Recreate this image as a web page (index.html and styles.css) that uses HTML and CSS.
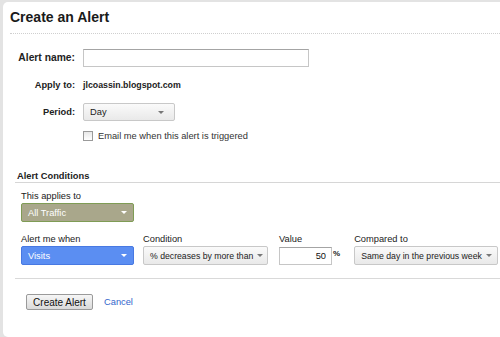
FILE: index.html
```html
<!DOCTYPE html>
<html lang="en">
<head>
	<meta charset="UTF-8">
	<title>Create an Alert</title>
	<link rel="stylesheet" href="styles.css">
</head>
<body>
	<div class="panel">
		<h1 class="title">Create an Alert</h1>

		<div class="form">
			<div class="row">
				<label class="lbl big">Alert name:</label>
				<input type="text" class="text-input name-input">
			</div>
			<div class="row">
				<span class="lbl">Apply to:</span>
				<span class="site">jlcoassin.blogspot.com</span>
			</div>
			<div class="row">
				<span class="lbl">Period:</span>
				<div class="select grey period"><span>Day</span><i class="caret"></i></div>
			</div>
			<div class="row check-row">
				<span class="lbl"></span>
				<label class="check"><span class="box"></span>Email me when this alert is triggered</label>
			</div>
		</div>

		<div class="conditions">
			<h2 class="sub">Alert Conditions</h2>
			<div class="cond-body">
				<div class="field">
					<div class="field-label">This applies to</div>
					<div class="select green w-first"><span>All Traffic</span><i class="caret"></i></div>
				</div>
				<div class="cond-row">
					<div class="field gap9">
						<div class="field-label">Alert me when</div>
						<div class="select blue w-first"><span>Visits</span><i class="caret"></i></div>
					</div>
					<div class="field gap11">
						<div class="field-label">Condition</div>
						<div class="select grey small w-cond"><span>% decreases by more than</span><i class="caret"></i></div>
					</div>
					<div class="field gap14">
						<div class="field-label">Value</div>
						<div class="value-wrap">
							<input type="text" class="text-input value-input" value="50">
							<span class="pct">%</span>
						</div>
					</div>
					<div class="field">
						<div class="field-label">Compared to</div>
						<div class="select grey small w-comp"><span>Same day in the previous week</span><i class="caret"></i></div>
					</div>
				</div>
			</div>
		</div>

		<div class="actions">
			<button class="btn">Create Alert</button>
			<a href="javascript:;" class="cancel">Cancel</a>
		</div>
	</div>
</body>
</html>
```

FILE: styles.css
```css
* {
	margin: 0;
	padding: 0;
	box-sizing: border-box;
}
html, body {
	height: 100%;
}
body {
	background: #e3e3e3;
	font-family: "Liberation Sans", Arial, sans-serif;
	font-size: 9.3px;
	color: #222;
	overflow: hidden;
}
.panel {
	margin: 2px 0 0 3px;
	height: calc(100% - 2px);
	padding-top: 7px;
	background: #fff;
	border-radius: 5px 0 0 5px;
}
.title {
	margin-left: 7px;
	padding-bottom: 8px;
	font-size: 14px;
	line-height: 16px;
	font-weight: bold;
	color: #1a1a1a;
	border-bottom: 1px dotted #cfcfcf;
}

/* top form */
.form {
	padding-top: 15px;
}
.row {
	display: flex;
	align-items: center;
	height: 18px;
	margin-bottom: 9px;
}
.row:nth-child(3) {
	margin-bottom: 6px;
}
.lbl {
	width: 72px;
	margin-right: 8px;
	text-align: right;
	font-weight: bold;
	line-height: 12px;
}
.lbl.big {
	font-size: 10.3px;
}
.site {
	font-weight: bold;
	font-size: 8.8px;
}
.text-input {
	font-family: inherit;
	font-size: 9.3px;
	border: 1px solid #c6c6c6;
	border-top-color: #a4a4a4;
	outline: none;
	background: #fff;
}
.name-input {
	width: 226px;
	height: 18px;
}
.check {
	display: flex;
	align-items: center;
	color: #333;
}
.box {
	width: 10px;
	height: 10px;
	margin-right: 5px;
	border: 1px solid #9a9a9a;
	background: linear-gradient(#e8e8e8, #fff);
}

/* selects */
.select {
	display: flex;
	align-items: center;
	justify-content: space-between;
	height: 19px;
	padding: 0 6px;
	border: 1px solid #c8c8c8;
	border-radius: 2px;
	white-space: nowrap;
}
.select.grey {
	background: linear-gradient(#fafafa, #e9e9e9);
	color: #222;
}
.select.small {
	font-size: 8.7px;
}
.select.green {
	background: #a9a78b;
	border-color: #7f9c55;
	color: #fff;
}
.select.blue {
	background: #5b8ef2;
	border-color: #4879e2;
	color: #fff;
}
.caret {
	flex: none;
	width: 0;
	height: 0;
	margin-left: 4px;
	border-top: 3px solid #777;
	border-left: 3px solid transparent;
	border-right: 3px solid transparent;
}
.green .caret,
.blue .caret {
	border-top-color: #fff;
}
.period {
	width: 92px;
	height: 18px;
	padding-right: 10px;
}
.w-first {
	width: 113px;
}
.w-cond {
	width: 125px;
	padding-right: 4px;
}
.w-comp {
	width: 144px;
	padding-right: 5px;
}

/* alert conditions */
.conditions {
	margin: 25px 0 0 12px;
	padding-bottom: 13px;
	border-bottom: 1px solid #d9d9d9;
}
.sub {
	padding-left: 2px;
	font-size: 9.3px;
	line-height: 12px;
	font-weight: bold;
	border-bottom: 1px solid #d6d6d6;
}
.cond-body {
	padding: 7px 0 0 6px;
}
.field-label {
	line-height: 12px;
	margin-bottom: 1px;
	color: #222;
}
.cond-row {
	display: flex;
	margin-top: 11px;
}
.gap9 {
	margin-right: 9px;
}
.gap11 {
	margin-right: 11px;
}
.gap14 {
	margin-right: 14px;
}
.value-wrap {
	display: flex;
	align-items: flex-start;
}
.value-input {
	width: 53px;
	height: 18px;
	margin-top: 1px;
	padding-right: 5px;
	text-align: right;
	color: #111;
}
.pct {
	margin: 3px 0 0 1px;
	font-size: 8px;
	font-weight: bold;
}

/* buttons */
.actions {
	display: flex;
	align-items: center;
	padding: 15px 0 0 23px;
}
.btn {
	width: 67px;
	height: 16px;
	font-family: inherit;
	font-size: 10px;
	color: #111;
	border: 1px solid #9a9a9a;
	border-radius: 2px;
	background: linear-gradient(#f6f6f6, #dadada);
}
.cancel {
	margin-left: 11px;
	font-size: 9.3px;
	color: #3366cc;
	text-decoration: none;
}
```
